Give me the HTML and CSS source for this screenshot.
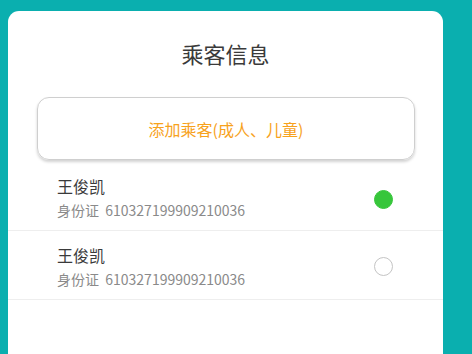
FILE: index.html
```html
<!DOCTYPE html>
<html lang="zh">
<head>
<meta charset="utf-8">
<link rel="stylesheet" href="styles.css">
</head>
<body>
<div class="card">
  <h1 class="title">乘客信息</h1>
  <div class="add-btn">添加乘客(成人、儿童)</div>
  <div class="list">
    <div class="row first">
      <div class="info">
        <div class="name">王俊凯</div>
        <div class="idno">身份证&nbsp; 610327199909210036</div>
      </div>
      <span class="radio checked"></span>
    </div>
    <div class="row">
      <div class="info">
        <div class="name">王俊凯</div>
        <div class="idno">身份证&nbsp; 610327199909210036</div>
      </div>
      <span class="radio"></span>
    </div>
  </div>
</div>
</body>
</html>
```

FILE: styles.css
```css
html, body {
  margin: 0;
  padding: 0;
  height: 100%;
  overflow: hidden;
}
body {
  background: #0aafaf;
  font-family: "Noto Sans CJK SC", "Noto Sans", sans-serif;
}
.card {
  margin: 11px 0 0 8px;
  width: 435px;
  height: calc(100vh - 11px);
  background: #fff;
  border-radius: 11px 11px 0 0;
  padding-top: 27px;
  box-sizing: border-box;
}
.title {
  margin: 0;
  font-size: 22px;
  line-height: 30px;
  font-weight: 400;
  color: #3a3a3a;
  text-align: center;
}
.add-btn {
  margin: 29px 28px 0 29px;
  height: 61px;
  border: 1px solid #cfcfcf;
  border-radius: 12px;
  box-shadow: 0 2px 3px rgba(0, 0, 0, 0.18);
  display: flex;
  align-items: center;
  justify-content: center;
  color: #f7a21c;
  font-size: 16px;
}
.list {
  margin-top: 2px;
}
.row {
  display: flex;
  align-items: center;
  justify-content: space-between;
  padding: 13px 50px 10px 49px;
  border-bottom: 1px solid #eeeeee;
}
.first .radio {
  margin-top: 4px;
}
.name {
  font-size: 16px;
  line-height: 22px;
  color: #3a3a3a;
}
.idno {
  margin-top: 3px;
  font-size: 14px;
  line-height: 20px;
  color: #8a8a8a;
}
.radio {
  width: 19px;
  height: 19px;
  border-radius: 50%;
  border: 1px solid #c4c4c4;
  box-sizing: border-box;
}
.radio.checked {
  background: #37c63b;
  border-color: #37c63b;
}
```
